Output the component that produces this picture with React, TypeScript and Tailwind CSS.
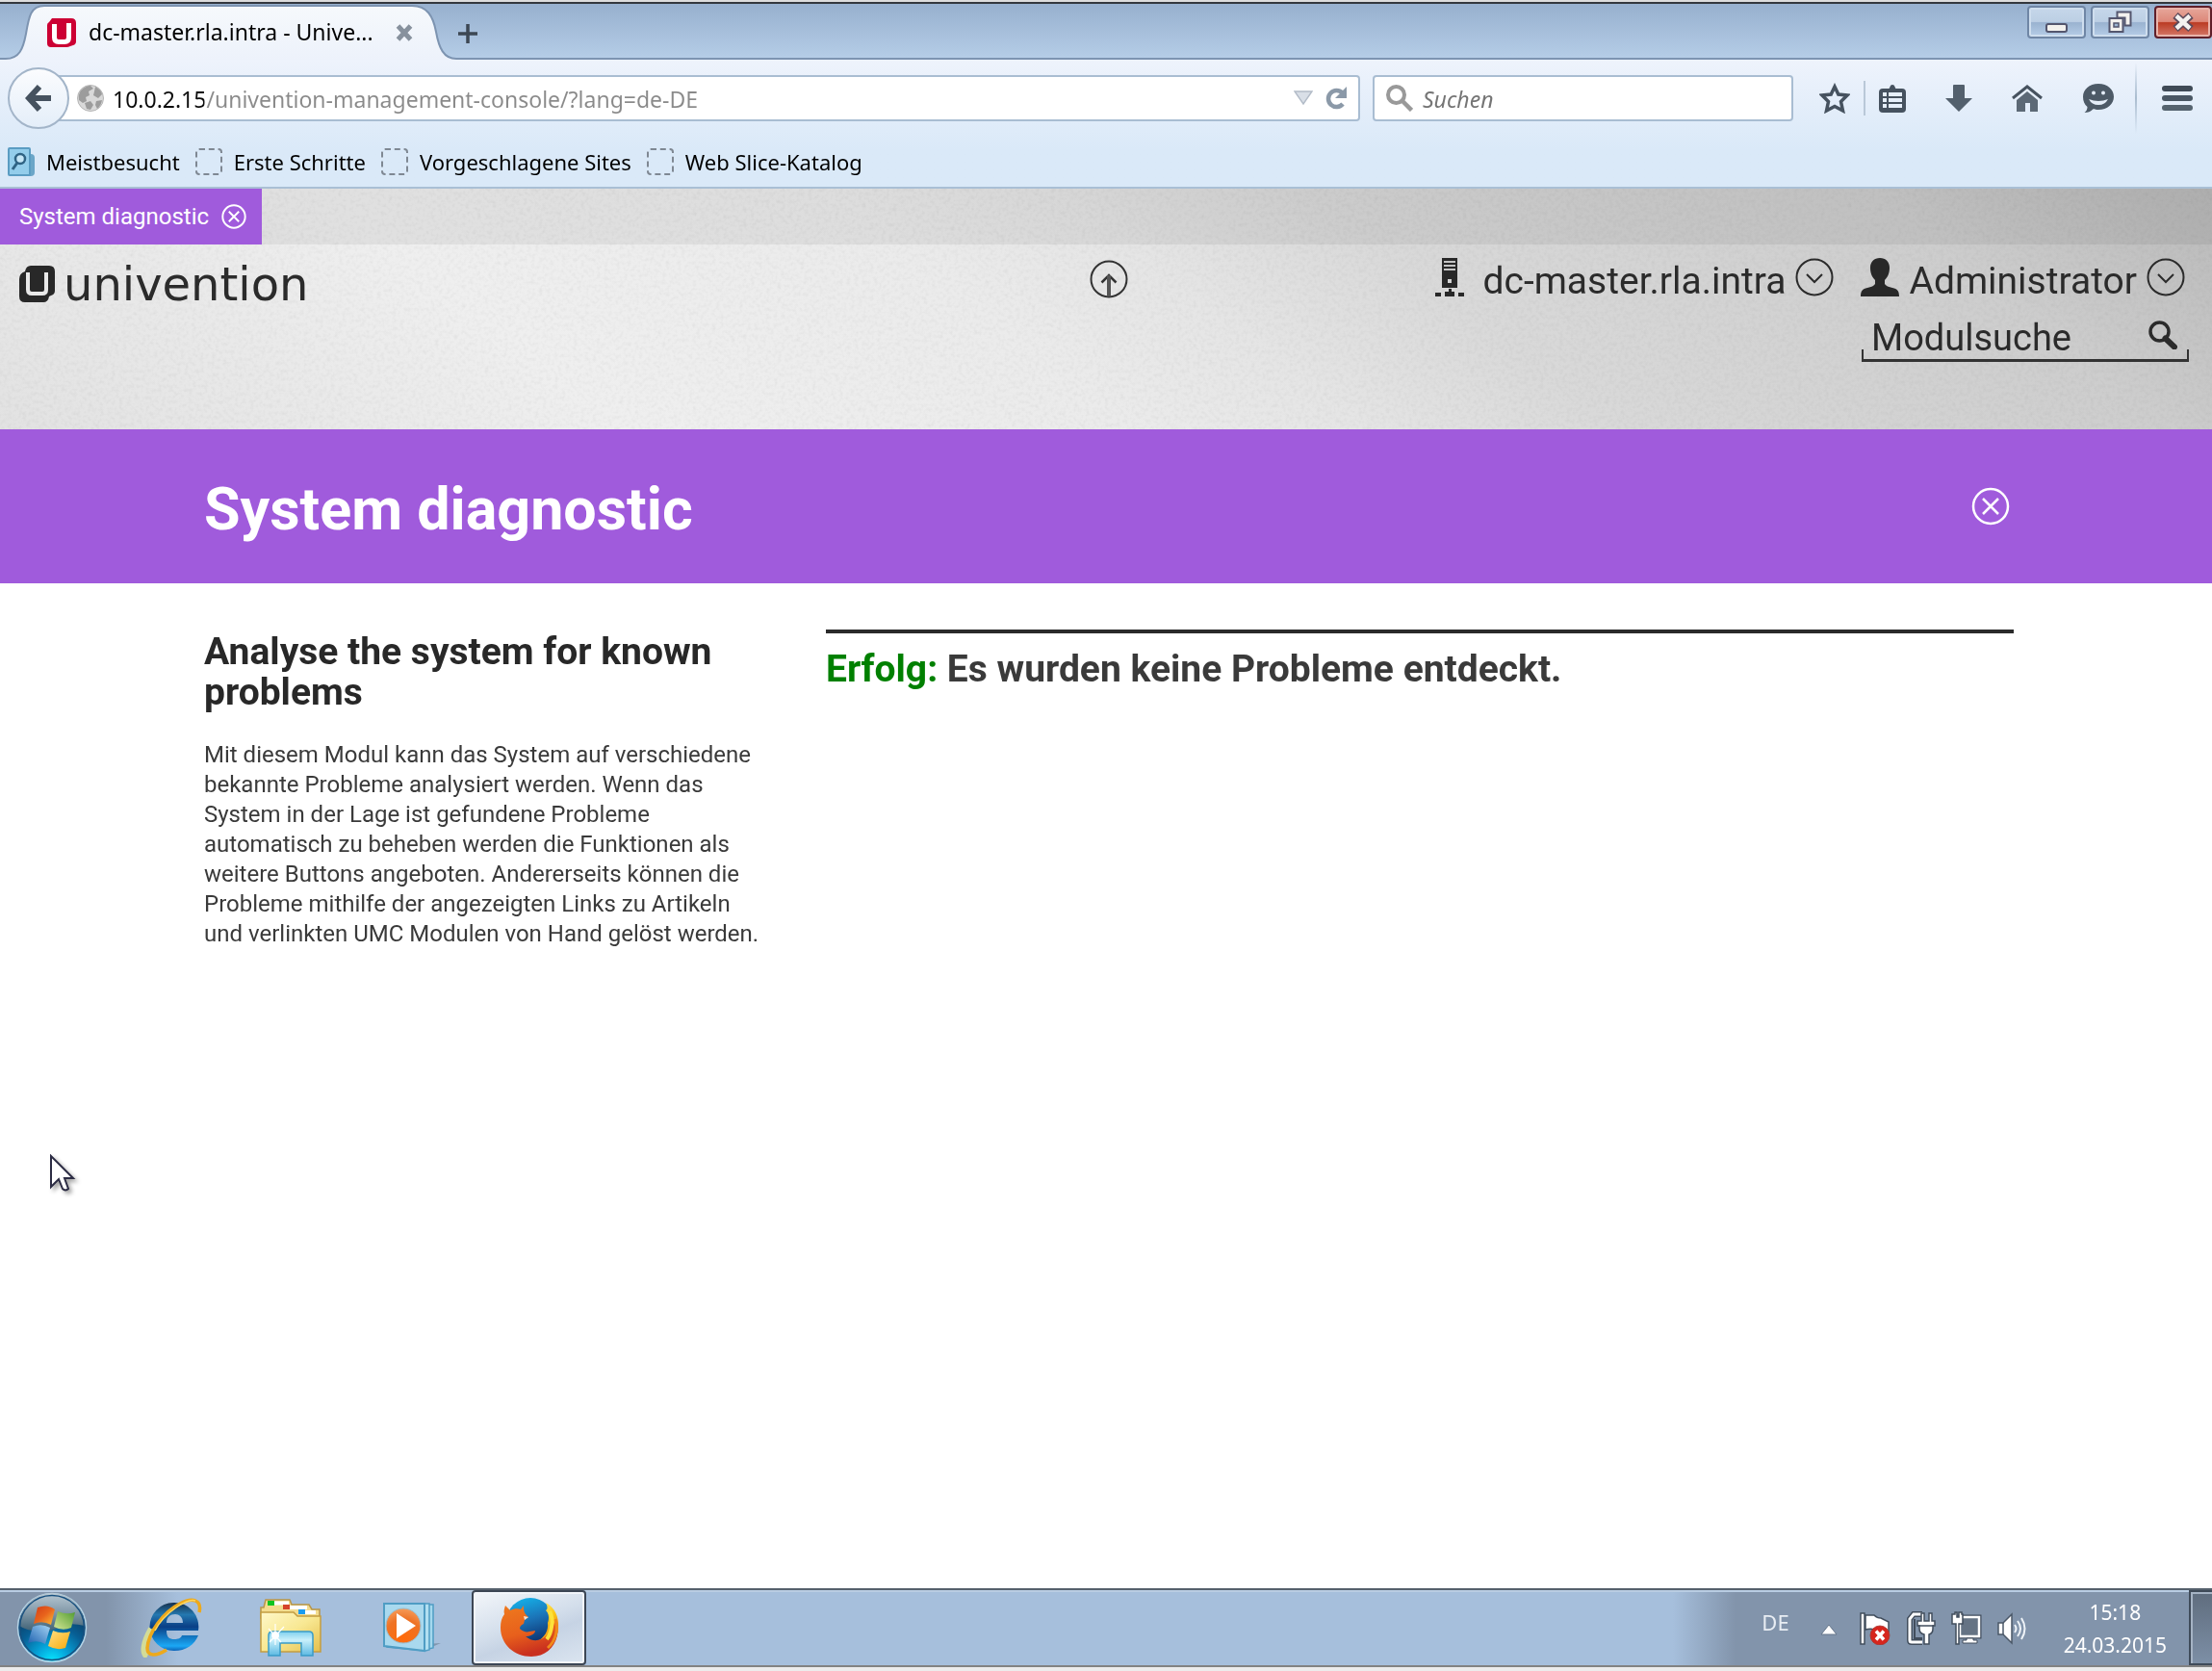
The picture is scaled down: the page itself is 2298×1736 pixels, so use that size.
import type { ReactNode } from "react";

/* ---------- browser chrome icons ---------- */

function UniventionFavicon() {
  return (
    <svg viewBox="0 0 30 30" className="h-[30px] w-[30px] shrink-0" aria-hidden="true">
      <path d="M5 0h20q5 0 5 5v19q0 3-3 4l-3 1q-2 1-4 1H4q-4 0-4-4V7Q0 5 2 4z" fill="#cc0033" />
      <path d="M5 6h5v14q0 2 2 2h6q2 0 2-2V5h5v15q0 7-7 7h-6q-7 0-7-7z" fill="#fff" />
    </svg>
  );
}

function CrossSmall() {
  return (
    <svg viewBox="0 0 18 18" className="h-[18px] w-[18px]" aria-hidden="true">
      <path d="M2.500 2l13 14M15.500 2l-13 14" stroke="#87919d" strokeWidth="5" />
    </svg>
  );
}

function MinimizeGlyph() {
  return (
    <svg viewBox="0 0 24 12" className="mt-3 h-3 w-6" aria-hidden="true">
      <rect x="1" y="2" width="21" height="8" rx="2" fill="#f3f1ee" stroke="#54566e" strokeWidth="2" />
    </svg>
  );
}

function RestoreGlyph() {
  return (
    <svg viewBox="0 0 26 24" className="h-6 w-[26px]" aria-hidden="true">
      <path d="M9.500 1.500h14v14h-6v-8h-8z" fill="#f3f1ee" stroke="#54566e" strokeWidth="2" />
      <rect x="1.500" y="8" width="14" height="14" fill="#f3f1ee" stroke="#54566e" strokeWidth="2" />
      <rect x="6" y="13" width="5" height="4" fill="#9db4d0" stroke="#54566e" strokeWidth="1.500" />
    </svg>
  );
}

function CloseGlyph() {
  return (
    <svg viewBox="0 0 24 20" className="h-5 w-6" aria-hidden="true">
      <path d="M4 3l16 14M20 3L4 17" stroke="#5d4a5a" strokeWidth="8" />
      <path d="M5 3.500l14 13M19 3.500l-14 13" stroke="#f4f1ef" strokeWidth="4.500" />
    </svg>
  );
}

function BackArrow() {
  return (
    <svg viewBox="0 0 28 30" className="h-[30px] w-7" aria-hidden="true">
      <path d="M15 3L4 15l11 12M4 15h23" fill="none" stroke="#46525f" strokeWidth="6" />
    </svg>
  );
}

function Globe() {
  return (
    <svg viewBox="0 0 28 28" className="h-7 w-7 shrink-0" aria-hidden="true">
      <circle cx="14" cy="14" r="13.500" fill="#d9d9d9" stroke="#b5b5b5" strokeWidth="1" />
      <path d="M4 6q5-5 10-5l3 3-5 3 1 4-4 2 1 4-4 2-4-3q-1-6 2-10zM19 2q6 3 7 8l-4 4-5-3 1-4zM8 19l6-2 3 4-3 5-4-1zM20 17l6-1q-1 6-5 9l-2-4z" fill="#9c9c9c" />
    </svg>
  );
}

function Reload() {
  return (
    <svg viewBox="0 0 24 26" className="h-[26px] w-6" aria-hidden="true">
      <path d="M18.500 7.500A8.500 8.500 0 1 0 19 19" fill="none" stroke="#8b99a8" strokeWidth="4.500" />
      <path d="M23 1v12H11z" fill="#8b99a8" />
    </svg>
  );
}

function SearchGray() {
  return (
    <svg viewBox="0 0 28 28" className="h-7 w-7 shrink-0" aria-hidden="true">
      <circle cx="10.500" cy="10.500" r="8.500" fill="none" stroke="#999" strokeWidth="4" />
      <path d="M16.500 16.500l10 10" stroke="#999" strokeWidth="4.500" />
    </svg>
  );
}

function StarIcon() {
  return (
    <svg viewBox="0 0 32 32" className="h-8 w-8" aria-hidden="true">
      <path d="M16 4l3.800 8 9.200 1-6.500 6.500L24.500 29 16 24.500 7.500 29l2-9.500L3 13l9.200-1z" fill="none" stroke="#46525f" strokeWidth="3.500" />
    </svg>
  );
}

function ClipboardIcon() {
  return (
    <svg viewBox="0 0 28 30" className="h-[30px] w-7" aria-hidden="true">
      <path d="M8 6c2 0 3-1 3.500-3Q12 1 14 1t2.500 2C17 5 18 6 20 6z" fill="#46525f" />
      <rect x="0" y="5" width="28" height="25" rx="4" fill="#46525f" />
      <path d="M4 9h4v4H4zM10 9h14v4H10zM4 15h4v4H4zM10 15h14v4H10zM4 21h4v4H4zM10 21h14v4H10z" fill="#e6effa" />
    </svg>
  );
}

function DownloadIcon() {
  return (
    <svg viewBox="0 0 28 28" className="h-7 w-7" aria-hidden="true">
      <path d="M8 1q0-1 1-1h10q1 0 1 1v13h8L14 28 0 14h8z" fill="#53606d" />
    </svg>
  );
}

function HomeIcon() {
  return (
    <svg viewBox="0 0 32 28" className="h-7 w-8" aria-hidden="true">
      <path d="M1 14L16 2l15 12" fill="none" stroke="#46525f" strokeWidth="3" />
      <path d="M16 7l11 9v12h-8v-9h-5v9H5V16z" fill="#5c6976" />
    </svg>
  );
}

function ChatIcon() {
  return (
    <svg viewBox="0 0 34 31" className="h-[31px] w-[34px]" aria-hidden="true">
      <path d="M17 0c9.500 0 16 6 16 13.500S26.500 27 17 27c-2 0-4-.2-5.500-.8C9 29 6 30 2.500 30c2-1.500 3-3.500 3-6C2.500 21.500 1 18 1 13.500 1 6 7.500 0 17 0z" fill="#4d5a67" />
      <circle cx="12" cy="9.500" r="2" fill="#e4edf8" />
      <circle cx="22" cy="9.500" r="2" fill="#e4edf8" />
      <path d="M7 16q10 4 20 0-3 6-10 6T7 16z" fill="#e4edf8" />
    </svg>
  );
}

function MenuIcon() {
  return (
    <svg viewBox="0 0 32 27" className="h-[27px] w-8" aria-hidden="true">
      <rect width="32" height="6" rx="3" fill="#3f4a56" />
      <rect y="10" width="32" height="6" rx="3" fill="#4a5764" />
      <rect y="20" width="32" height="6" rx="3" fill="#55636f" />
    </svg>
  );
}

function MostVisitedIcon() {
  return (
    <svg viewBox="0 0 28 31" className="h-[31px] w-7 shrink-0" aria-hidden="true">
      <path d="M20 7h4q4 0 4 4v15q0 4-4 4H8v-4z" fill="#6ba6c8" />
      <rect x="1" y="1" width="22" height="28" rx="1" fill="#93cdeb" stroke="#5a9cc2" strokeWidth="2" />
      <circle cx="13" cy="12" r="5" fill="#c5e6f6" stroke="#2f6384" strokeWidth="2.500" />
      <path d="M10 16l-5 7" stroke="#2f6384" strokeWidth="3" />
    </svg>
  );
}

/* ---------- page icons ---------- */

function CircleCross({ className, stroke }: { className: string; stroke: number }) {
  return (
    <svg viewBox="0 0 40 40" className={className} fill="none" stroke="currentColor" strokeWidth={stroke} aria-hidden="true">
      <circle cx="20" cy="20" r="18" />
      <path d="M12 12l16 16M28 12L12 28" />
    </svg>
  );
}

function CircleChevron() {
  return (
    <svg viewBox="0 0 40 40" className="h-10 w-10" fill="none" stroke="#2b2b2b" strokeWidth="2" aria-hidden="true">
      <circle cx="20" cy="20" r="18.500" />
      <path d="M12 17l8 8 8-8" />
    </svg>
  );
}

function CircleArrowUp() {
  return (
    <svg viewBox="0 0 40 40" className="h-10 w-10" fill="none" stroke="#333" strokeWidth="2" aria-hidden="true">
      <circle cx="20" cy="20" r="18.500" />
      <path d="M12.500 23.500l7.500-7.500 7.500 7.500" strokeWidth="2.500" />
      <path d="M20 16v22" stroke="#555" strokeWidth="4" />
    </svg>
  );
}

function UniventionMark() {
  return (
    <svg viewBox="0 0 38 38" className="h-[38px] w-[38px] shrink-0" aria-hidden="true">
      <path d="M12 0h19q6 0 6 6v20q0 4-4 5l-2 1q-1 6-6 6H6q-6 0-6-6V14q0-6 6-8 1-6 6-6z" fill="#282828" />
      <path d="M9 7v18q0 4 4 4h11q4 0 4-4V7" fill="none" stroke="#e9e9e9" strokeWidth="4" />
    </svg>
  );
}

function ServerIcon() {
  return (
    <svg viewBox="0 0 32 40" className="h-10 w-8" aria-hidden="true">
      <path d="M8 0h16v31H8z" fill="#282828" />
      <path d="M10 3h12v2H10zM10 7h12v2H10zM10 11h12v2H10z" fill="#c4c4c4" />
      <rect x="14" y="22" width="4" height="4" fill="#d5d5d5" />
      <path d="M15 32h3v3h3v5h-10v-5h4zM1 36h6v4H1zM25 36h6v4h-6z" fill="#282828" />
    </svg>
  );
}

function PersonIcon() {
  return (
    <svg viewBox="0 0 40 40" className="h-10 w-10" aria-hidden="true">
      <path d="M20 0c6 0 10 4 10 10 0 6-2 10-5 13v4c1 2 4 3 8 4 5 1 7 3 7 9H0c0-6 2-8 7-9 4-1 7-2 8-4v-4c-3-3-5-7-5-13C10 4 14 0 20 0z" fill="#282828" />
    </svg>
  );
}

function SearchDark() {
  return (
    <svg viewBox="0 0 30 30" className="h-[30px] w-[30px]" aria-hidden="true">
      <circle cx="11.500" cy="11.500" r="9.500" fill="none" stroke="#2b2b2b" strokeWidth="3.500" />
      <path d="M17.500 18.500l9.500 9" stroke="#2b2b2b" strokeWidth="6" strokeLinecap="round" />
    </svg>
  );
}

function PaperGrain() {
  return (
    <svg className="pointer-events-none absolute inset-0 h-full w-full opacity-15 mix-blend-multiply" aria-hidden="true">
      <filter id="grain" colorInterpolationFilters="sRGB">
        <feTurbulence type="fractalNoise" baseFrequency="0.25" numOctaves="3" seed="4" />
        <feColorMatrix type="saturate" values="0" />
        <feComponentTransfer>
          <feFuncA type="linear" slope="0" intercept="1" />
          <feFuncR type="linear" slope="0.700" intercept="0.600" />
          <feFuncG type="linear" slope="0.700" intercept="0.600" />
          <feFuncB type="linear" slope="0.700" intercept="0.600" />
        </feComponentTransfer>
      </filter>
      <rect width="100%" height="100%" filter="url(#grain)" />
    </svg>
  );
}

function MousePointer() {
  return (
    <svg viewBox="0 0 32 44" className="pointer-events-none absolute top-[1199px] left-[51px] h-11 w-8 drop-shadow-[3px_3px_2px_rgba(0,0,0,0.35)]" aria-hidden="true">
      <path d="M2 2v32l8-8 4 10q3 3 6 0l-4-11h9z" fill="#fff" stroke="#2c2c44" strokeWidth="2" />
    </svg>
  );
}

/* ---------- taskbar icons ---------- */

function StartOrb() {
  return (
    <svg viewBox="0 0 74 74" className="h-[74px] w-[74px]" aria-hidden="true">
      <defs>
        <radialGradient id="orbLow" cx="0.5" cy="1" r="0.75">
          <stop offset="0" stopColor="#08eaff" />
          <stop offset="0.3" stopColor="#05a9de" />
          <stop offset="0.7" stopColor="#075f95" />
          <stop offset="1" stopColor="#0b426b" />
        </radialGradient>
        <linearGradient id="orbTop" x1="0" y1="0" x2="0" y2="1">
          <stop offset="0" stopColor="#b9c9d4" />
          <stop offset="0.5" stopColor="#8299a8" />
          <stop offset="1" stopColor="#3f6175" />
        </linearGradient>
        <linearGradient id="flagR" x1="0" y1="0" x2="1" y2="1">
          <stop offset="0" stopColor="#d23c17" />
          <stop offset="0.5" stopColor="#e8641c" />
          <stop offset="1" stopColor="#fdc038" />
        </linearGradient>
        <linearGradient id="flagG" x1="0" y1="1" x2="1" y2="0">
          <stop offset="0" stopColor="#d5e796" />
          <stop offset="1" stopColor="#4f9a2f" />
        </linearGradient>
        <linearGradient id="flagB" x1="0" y1="1" x2="1" y2="0">
          <stop offset="0" stopColor="#1c5fae" />
          <stop offset="1" stopColor="#a4d5f5" />
        </linearGradient>
        <linearGradient id="flagY" x1="0" y1="0" x2="1" y2="1">
          <stop offset="0" stopColor="#ffe083" />
          <stop offset="1" stopColor="#f7a90c" />
        </linearGradient>
      </defs>
      <circle cx="37" cy="37" r="35.500" fill="url(#orbLow)" stroke="#b4d3e6" strokeWidth="1.500" />
      <path d="M3 35a34 34 0 0 1 68 0Q54 31 46 36T24 41Q10 40 3 35z" fill="url(#orbTop)" />
      <circle cx="37" cy="37" r="33.500" fill="none" stroke="#195180" strokeWidth="1.500" />
      <path d="M22 16q10-4 18 2l-4 16q-9-5-18-1z" fill="url(#flagR)" />
      <path d="M43 20q9 4 18 1l-4 16q-9 4-18-1z" fill="url(#flagG)" />
      <path d="M17 36q9-4 18 1l-5 17q-8-5-18-1z" fill="url(#flagB)" />
      <path d="M38 40q9 4 18 1l-5 17q-9 3-18-2z" fill="url(#flagY)" />
    </svg>
  );
}

function IeIcon() {
  return (
    <svg viewBox="0 0 66 62" className="h-[62px] w-[66px]" aria-hidden="true">
      <defs>
        <linearGradient id="ieBody" x1="0" y1="0" x2="0" y2="1">
          <stop offset="0" stopColor="#16304c" />
          <stop offset="0.25" stopColor="#2478b0" />
          <stop offset="0.5" stopColor="#0a3f86" />
          <stop offset="0.9" stopColor="#1ba8f5" />
          <stop offset="1" stopColor="#0c63b8" />
        </linearGradient>
      </defs>
      <path d="M35 5a25 25 0 0 1 26 29H28c0 7 3 9 8 9 4 0 7-1 8-4h17c-4 10-13 16-25 16A25 25 0 0 1 35 5zM28 26h17c0-6-4-9-8-9-5 0-9 3-9 9z" fill="url(#ieBody)" />
      <path d="M8 61C2 58 4 46 12 32" fill="none" stroke="#d3dc98" strokeWidth="6" />
      <path d="M62 15C65 2 55-1 42 6 24 15 9 37 8 52c0 9 9 9 20 2" fill="none" stroke="#eda91c" strokeWidth="3.500" />
      <path d="M58 3C50 0 26 15 16 34" fill="none" stroke="#ffd75c" strokeWidth="1.500" />
    </svg>
  );
}

function ExplorerIcon() {
  return (
    <svg viewBox="0 0 66 62" className="h-[62px] w-[66px]" aria-hidden="true">
      <defs>
        <linearGradient id="folder" x1="0" y1="0" x2="1" y2="1">
          <stop offset="0" stopColor="#fff8c9" />
          <stop offset="0.5" stopColor="#f8e893" />
          <stop offset="1" stopColor="#e5bf4c" />
        </linearGradient>
        <linearGradient id="stand" x1="0" y1="0" x2="0" y2="1">
          <stop offset="0" stopColor="#7fd0ee" />
          <stop offset="0.35" stopColor="#c9f0fb" />
          <stop offset="1" stopColor="#5cb9e2" />
        </linearGradient>
      </defs>
      <path d="M2 14V10h3l2-8h25l2 5h18l3 5h8v9H2z" fill="#f3dc8e" stroke="#b8964a" strokeWidth="1.500" />
      <path d="M10 3.500h21v4H10zM27 8h23v4H27zM44 13h15v4H44z" fill="#fff" />
      <rect x="9" y="3" width="7" height="5" fill="#0fc41f" />
      <rect x="25" y="7" width="7" height="5" fill="#d5432a" />
      <rect x="41" y="12" width="7" height="5" fill="#1a9cf2" />
      <path d="M2 15h34l4 4h24v37H2z" fill="url(#folder)" stroke="#c39d41" strokeWidth="1.500" />
      <path d="M10 60V39q0-4 4-4h38q4 0 4 4v21H44V47H22v13z" fill="url(#stand)" stroke="#3a9cc9" strokeWidth="1.500" />
      <path d="M10 32l13 14M26 30L11 46M17 27v22" stroke="#fff" strokeWidth="1.200" />
      <circle cx="17" cy="39" r="4" fill="#fff" />
    </svg>
  );
}

function MediaPlayerIcon() {
  return (
    <svg viewBox="0 0 62 54" className="h-[54px] w-[62px]" aria-hidden="true">
      <defs>
        <radialGradient id="wmp" cx="0.5" cy="0.85" r="0.9">
          <stop offset="0" stopColor="#ff6a0a" />
          <stop offset="0.6" stopColor="#ee7326" />
          <stop offset="1" stopColor="#f7a161" />
        </radialGradient>
      </defs>
      <path d="M45 44l16-1-14 6z" fill="#8196ad" />
      <path d="M10 3h43v45l-5 1-40-4z" fill="#a4d8ee" stroke="#4f9dc4" strokeWidth="1.500" />
      <path d="M6 2h43v48l-4 1-40-4z" fill="#b1dff1" stroke="#4f9dc4" strokeWidth="1.500" />
      <path d="M2 2h42v49L2 46z" fill="#a9d9ee" stroke="#4f9dc4" strokeWidth="2" />
      <circle cx="22" cy="25" r="18" fill="url(#wmp)" stroke="#9abed0" strokeWidth="1" />
      <path d="M15 12l20 13-20 13z" fill="#fff" />
    </svg>
  );
}

function FirefoxIcon() {
  return (
    <svg viewBox="0 0 62 62" className="h-[62px] w-[62px]" aria-hidden="true">
      <defs>
        <linearGradient id="ffGlobe" x1="0.3" y1="0" x2="0.6" y2="1">
          <stop offset="0" stopColor="#15b1e8" />
          <stop offset="0.45" stopColor="#1b74b8" />
          <stop offset="1" stopColor="#0b2a66" />
        </linearGradient>
        <linearGradient id="ffTail" x1="0" y1="0" x2="0.5" y2="1">
          <stop offset="0" stopColor="#fff08a" />
          <stop offset="0.5" stopColor="#fbc916" />
          <stop offset="1" stopColor="#e8661b" />
        </linearGradient>
        <linearGradient id="ffBody" x1="0" y1="0" x2="0.3" y2="1">
          <stop offset="0" stopColor="#ee7a1e" />
          <stop offset="0.6" stopColor="#e8601c" />
          <stop offset="1" stopColor="#c9301f" />
        </linearGradient>
      </defs>
      <circle cx="32" cy="25" r="25" fill="url(#ffGlobe)" />
      <path d="M48 5c9 5 14 14 13 27-1 10-6 19-14 24L38 46c9-5 13-12 12-20 2-5 1-10-2-13 2-1 2-4 0-8z" fill="url(#ffTail)" />
      <path d="M6 8l5 5c4-2 8-2 11-1l3-4c0 4 0 6 2 9l3 3-4 3-1 4c-3 1-4 3-4 5 3 3 7 4 10 3l6-1c0 4-6 6-10 6 7 6 15 5 21 0 5-4 8-9 9-15 3 5 4 9 3 14-3 13-13 22-27 22C15 61 1 48 1 31c0-6 1-10 4-14-1-3 0-6 1-9z" fill="url(#ffBody)" />
      <path d="M52 14q4 8 2 16-1 8-5 13" fill="none" stroke="#fde23a" strokeWidth="4" />
      <path d="M58 22c3 10 1 22-8 30" fill="none" stroke="#f08a1b" strokeWidth="3" />
      <path d="M25 19l5 1-4 3z" fill="#f6e3d0" />
    </svg>
  );
}

function TrayFlag() {
  return (
    <svg viewBox="0 0 34 34" className="h-[34px] w-[34px]" aria-hidden="true">
      <path d="M2 1h4v32H2zM7 3h9q3 3 7 3l8 4v10l-10-1q-8-3-14-1z" fill="#fff" stroke="#414d5c" strokeWidth="1.500" />
      <circle cx="22" cy="24" r="10" fill="#d6251d" stroke="#a8332c" strokeWidth="0.800" />
      <path d="M18 19.500l8 9M26 19.500l-8 9" stroke="#fff" strokeWidth="3.500" />
    </svg>
  );
}

function TrayPlug() {
  return (
    <svg viewBox="0 0 30 36" className="h-9 w-[30px]" aria-hidden="true">
      <path d="M16 3H7L3 8v22q0 2 2 2h11" fill="none" stroke="#414d5c" strokeWidth="6" />
      <path d="M16 3H7L3 8v22q0 2 2 2h11" fill="none" stroke="#fff" strokeWidth="3" />
      <path d="M8 8v20h8" fill="none" stroke="#414d5c" strokeWidth="2" />
      <path d="M15 2h3v8h5V2h3v8h3v5h-2v3q0 5-4 6v10h-5V24q-5-1-5-6v-3h-2v-5h4z" fill="#fff" stroke="#414d5c" strokeWidth="1.500" />
      <path d="M12 15h16" stroke="#414d5c" strokeWidth="1.500" />
    </svg>
  );
}

function TrayNetwork() {
  return (
    <svg viewBox="0 0 32 36" className="h-9 w-8" aria-hidden="true">
      <rect x="9" y="6" width="20" height="20" fill="#586676" stroke="#414d5c" strokeWidth="5" />
      <rect x="9" y="6" width="20" height="20" fill="#657384" stroke="#fff" strokeWidth="2.500" />
      <path d="M16 28h7v2h4v3H12v-3h4z" fill="#fff" stroke="#414d5c" strokeWidth="1" />
      <path d="M1 3h3V1h2v5h2V1h3v2h1v10H8v21H5V13H1z" fill="#fff" stroke="#414d5c" strokeWidth="1.500" />
    </svg>
  );
}

function TraySpeaker() {
  return (
    <svg viewBox="0 0 32 34" className="h-[34px] w-8" aria-hidden="true">
      <path d="M1 11h5L15 2v30l-9-9H1z" fill="#fff" stroke="#4b5868" strokeWidth="1.500" />
      <path d="M6 11v12" stroke="#4b5868" strokeWidth="1.500" />
      <path d="M18 13q3 4 0 8M21 9q6 8 0 16M25 6q7 11 0 22" fill="none" stroke="#eef3f8" strokeWidth="2" />
    </svg>
  );
}

/* ---------- building blocks ---------- */

function IconButton({ label, className = "", children }: { label: string; className?: string; children: ReactNode }) {
  return (
    <button type="button" aria-label={label} className={`flex shrink-0 items-center justify-center ${className}`}>
      {children}
    </button>
  );
}

function TitleBar() {
  return (
    <div className="flex h-[58px] items-end bg-linear-to-b from-[#97b0ce] to-[#b6cee8] shadow-[inset_0_-2px_0_#7d94b1]">
      <div className="relative h-[57px] w-[478px] shrink-0">
        <svg viewBox="0 0 478 57" className="absolute inset-0 h-full w-full" aria-hidden="true">
          <defs>
            <linearGradient id="tabFill" x1="0" y1="0" x2="0" y2="1">
              <stop offset="0" stopColor="#f6f9fc" />
              <stop offset="1" stopColor="#edf2fb" />
            </linearGradient>
          </defs>
          <path d="M0 57v-1h6c14 0 18-10 21-26C30 12 32 1 46 1h382c16 0 22 11 25 27 3 17 8 28 21 28h4v1z" fill="url(#tabFill)" />
          <path d="M0 56h6c14 0 18-10 21-26C30 12 32 1 46 1h382c16 0 22 11 25 27 3 17 8 28 21 28h4" fill="none" stroke="#7d94b1" strokeWidth="2" />
        </svg>
        <div className="relative flex h-full items-center pl-[49px]">
          <UniventionFavicon />
          <span className="ml-[13px] w-[319px] text-[23px] whitespace-nowrap text-black">dc-master.rla.intra - Unive...</span>
          <IconButton label="Tab schließen">
            <CrossSmall />
          </IconButton>
        </div>
      </div>
      <IconButton label="Neuer Tab" className="mb-[17px] -ml-0.5">
        <svg viewBox="0 0 20 20" className="h-5 w-5" aria-hidden="true">
          <path d="M10 0v20M0 10h20" stroke="#3d4753" strokeWidth="3.500" />
        </svg>
      </IconButton>
      <div className="ml-auto flex gap-[5px] self-start pt-0.5">
        <IconButton label="Minimieren" className="h-[34px] w-[61px] rounded-sm border-2 border-[#6f86a5] bg-[linear-gradient(#c6d7ea,#bccfe4_48%,#9ab3d0_52%,#b6cde8)] shadow-[inset_0_0_0_2px_#cfdeee]">
          <MinimizeGlyph />
        </IconButton>
        <IconButton label="Verkleinern" className="h-[34px] w-[61px] rounded-sm border-2 border-[#6f86a5] bg-[linear-gradient(#c6d7ea,#bccfe4_48%,#9ab3d0_52%,#b6cde8)] shadow-[inset_0_0_0_2px_#cfdeee]">
          <RestoreGlyph />
        </IconButton>
        <IconButton label="Schließen" className="h-[34px] w-[60px] rounded-sm border-2 border-[#5f1f2a] bg-[linear-gradient(#e6a79b,#dd8879_48%,#bb3c24_52%,#d5796a)] shadow-[inset_0_0_0_2px_#e9b3aa]">
          <CloseGlyph />
        </IconButton>
      </div>
    </div>
  );
}

function NavBar() {
  return (
    <div className="flex h-20 items-center pr-5 pl-2">
      <IconButton label="Zurück" className="relative z-10 h-16 w-16 rounded-full border-2 border-[#a3b5c9] bg-linear-to-b from-[#fbfcfe] to-[#e4eef9]">
        <BackArrow />
      </IconButton>
      <div className="-ml-5 flex h-12 flex-1 items-center rounded-sm border-2 border-[#a9bdd2] bg-white pr-[11px] pl-[26px]">
        <Globe />
        <input
          aria-label="Adresse"
          defaultValue="10.0.2.15/univention-management-console/?lang=de-DE"
          className="ml-[9px] h-10 min-w-0 flex-1 bg-[linear-gradient(90deg,#0c0c0c_95px,#8a8a8a_95px)] bg-clip-text pt-0.5 text-[23px] text-transparent outline-none"
        />
        <IconButton label="Verlauf" className="mr-3">
          <svg viewBox="0 0 20 16" className="h-4 w-5" aria-hidden="true">
            <path d="M1 1h18l-9 13z" fill="#d9dfe7" stroke="#b3bcc8" strokeWidth="1.500" />
          </svg>
        </IconButton>
        <IconButton label="Neu laden">
          <Reload />
        </IconButton>
      </div>
      <label className="ml-[13px] flex h-12 w-[437px] items-center rounded-sm border-2 border-[#a9bdd2] bg-white px-3">
        <SearchGray />
        <input aria-label="Suchen" placeholder="Suchen" className="ml-2.5 h-10 min-w-0 flex-1 pt-0.5 text-[23px] italic outline-none placeholder:text-[#757575]" />
      </label>
      <IconButton label="Lesezeichen setzen" className="ml-[27px]">
        <StarIcon />
      </IconButton>
      <span className="mx-3.5 h-9 w-0.5 bg-[#b9c8d8]" />
      <div className="flex items-center gap-[41px]">
        <IconButton label="Lesezeichen anzeigen"><ClipboardIcon /></IconButton>
        <IconButton label="Downloads"><DownloadIcon /></IconButton>
        <IconButton label="Startseite"><HomeIcon /></IconButton>
        <IconButton label="Chat"><ChatIcon /></IconButton>
      </div>
      <span className="mr-[26px] ml-[21px] h-[74px] w-0.5 bg-linear-to-b from-transparent via-[#a9bccf] to-transparent" />
      <IconButton label="Menü"><MenuIcon /></IconButton>
    </div>
  );
}

function BookmarksBar() {
  return (
    <nav className="flex h-[54px] items-center gap-4 border-b-2 border-[#a9bfd5] pl-2 text-[22px] text-black" aria-label="Lesezeichen">
      <a href="#meistbesucht" className="flex items-center gap-3">
        <MostVisitedIcon />
        Meistbesucht
      </a>
      {["Erste Schritte", "Vorgeschlagene Sites", "Web Slice-Katalog"].map((title) => (
        <a key={title} href="#lesezeichen" className="flex items-center gap-3">
          <span className="h-7 w-7 rounded-sm border-2 border-dashed border-[#7f8893]" />
          {title}
        </a>
      ))}
    </nav>
  );
}

function PageHeader() {
  return (
    <header className="relative bg-[linear-gradient(38deg,#e2e2e2,#efefef_25%,#ebebeb_45%,#e5e5e5_54%,#d9d9d9_64%,#cdcdcd_86%,#b9b9b9)] text-[#2b2b2b]">
      <PaperGrain />
      <div className="relative flex h-[58px] bg-black/6">
        <div className="flex items-center gap-[13px] bg-[#a05bdc] pr-4 pl-5 text-2xl text-white">
          <a href="#diagnostic">System diagnostic</a>
          <IconButton label="System diagnostic schließen">
            <CircleCross className="h-[26px] w-[26px]" stroke={3} />
          </IconButton>
        </div>
      </div>
      <div className="relative grid h-48 grid-cols-[1fr_auto_1fr] items-start pr-6 pl-5">
        <a href="#start" className="flex items-center pt-4 font-['DejaVu_Sans',sans-serif]">
          <UniventionMark />
          <span className="ml-2 text-[48px] leading-[50px]">univention</span>
        </a>
        <IconButton label="Nach oben" className="mt-4 ml-2.5">
          <CircleArrowUp />
        </IconButton>
        <div className="flex flex-col items-end text-[39px]">
          <div className="flex h-[68px] items-center gap-7 pr-1">
            <button type="button" className="flex items-center gap-2.5">
              <ServerIcon />
              <span className="ml-2 pt-2 whitespace-nowrap">dc-master.rla.intra</span>
              <CircleChevron />
            </button>
            <button type="button" className="flex items-center gap-2.5">
              <PersonIcon />
              <span className="pt-2 whitespace-nowrap">Administrator</span>
              <CircleChevron />
            </button>
          </div>
          <label className="relative flex h-[54px] w-[340px] items-center border-b-3 border-[#333] pr-3 pl-2.5">
            <span className="absolute bottom-0 left-0 h-2.5 w-0.5 bg-[#333]" />
            <span className="absolute right-0 bottom-0 h-2.5 w-0.5 bg-[#333]" />
            <input aria-label="Modulsuche" placeholder="Modulsuche" className="min-w-0 flex-1 pt-2 text-[38px] outline-none placeholder:text-[#2b2b2b]" />
            <SearchDark />
          </label>
        </div>
      </div>
    </header>
  );
}

function Taskbar() {
  return (
    <footer>
      <div className="flex h-[82px] items-center border-t-2 border-b-2 border-t-[#55606c] border-b-[#828282] bg-[linear-gradient(90deg,#8294ab_100px,#8294ab_110px,#a6bfdc_185px,#a6bfdc_calc(100%_-_560px),#8294ab_calc(100%_-_495px))] pl-[17px] shadow-[inset_0_2px_0_#b9cde3]">
        <IconButton label="Start"><StartOrb /></IconButton>
        <IconButton label="Internet Explorer" className="ml-[54px]"><IeIcon /></IconButton>
        <IconButton label="Windows-Explorer" className="ml-[58px]"><ExplorerIcon /></IconButton>
        <IconButton label="Media Player" className="ml-[62px]"><MediaPlayerIcon /></IconButton>
        <IconButton label="Firefox" className="ml-[31px] h-[78px] w-[119px] rounded-sm border-2 border-[#3c4654] bg-[linear-gradient(160deg,#f3f6fa,#d3deeb_45%,#c6d3e4_60%,#dbe5f0)] shadow-[inset_0_0_0_2px_#f1f5fa]">
          <FirefoxIcon />
        </IconButton>
        <div className="ml-auto flex h-full items-center text-white">
          <span className="pb-3 text-[22px] text-[#e8edf3]">DE</span>
          <IconButton label="Ausgeblendete Symbole" className="ml-8 pt-1">
            <svg viewBox="0 0 18 12" className="h-3 w-[18px]" aria-hidden="true">
              <path d="M9 1l8 10H1z" fill="#fff" stroke="#65758a" strokeWidth="1" />
            </svg>
          </IconButton>
          <div className="ml-[22px] flex items-center gap-4 pt-0.5">
            <IconButton label="Wartungscenter"><TrayFlag /></IconButton>
            <IconButton label="Energie"><TrayPlug /></IconButton>
            <IconButton label="Netzwerk"><TrayNetwork /></IconButton>
            <IconButton label="Lautstärke"><TraySpeaker /></IconButton>
          </div>
          <div className="ml-[37px] pt-0.5 text-center text-[21px] leading-[34px]">
            <div>15:18</div>
            <div>24.03.2015</div>
          </div>
          <button type="button" aria-label="Desktop anzeigen" className="ml-[23px] h-full w-6 border-2 border-r-0 border-[#3f4b59] bg-linear-to-b from-[#5f6d7e] to-[#7d8fa6] shadow-[inset_2px_2px_0_#a5b3c4]" />
        </div>
      </div>
      <div className="h-1 bg-[#ececec]" />
    </footer>
  );
}

export default function App() {
  return (
    <div className="relative flex min-h-screen flex-col bg-white font-['Noto_Sans',sans-serif]">
      <div className="border-t-2 border-b-2 border-t-[#dcdcdc] border-b-[#33373d]" />
      <TitleBar />
      <div className="bg-linear-to-b from-[#eef3fc] to-[#dae9f8] to-70%">
        <NavBar />
        <BookmarksBar />
      </div>
      <div className="flex flex-1 flex-col font-[Roboto,sans-serif]">
        <PageHeader />
        <div className="flex h-40 items-center justify-between bg-[#a05bdc] pr-[210px] pl-[212px] text-white">
          <h1 className="pt-2 text-[61px] font-bold">System diagnostic</h1>
          <IconButton label="Modul schließen">
            <CircleCross className="h-10 w-10" stroke={2.5} />
          </IconButton>
        </div>
        <main className="grid flex-1 grid-cols-[582px_1fr] content-start gap-16 pt-12 pr-[206px] pl-[212px]">
          <section className="pt-0.5">
            <h2 className="text-[39px] leading-[42px] font-bold text-[#282828]">Analyse the system for known problems</h2>
            <p className="mt-[29px] text-2xl leading-[31px] text-[#3a3a3a]">
              Mit diesem Modul kann das System auf verschiedene bekannte Probleme analysiert werden. Wenn das System in der Lage ist gefundene Probleme automatisch zu beheben werden die Funktionen als weitere Buttons angeboten. Andererseits können die Probleme mithilfe der angezeigten Links zu Artikeln und verlinkten UMC Modulen von Hand gelöst werden.
            </p>
          </section>
          <section className="border-t-4 border-[#2b2b2b] pt-4">
            <p className="text-[39px] leading-[42px] font-bold text-[#3a3a3a]">
              <span className="text-[#008000]">Erfolg:</span> Es wurden keine Probleme entdeckt.
            </p>
          </section>
        </main>
      </div>
      <Taskbar />
      <MousePointer />
    </div>
  );
}
